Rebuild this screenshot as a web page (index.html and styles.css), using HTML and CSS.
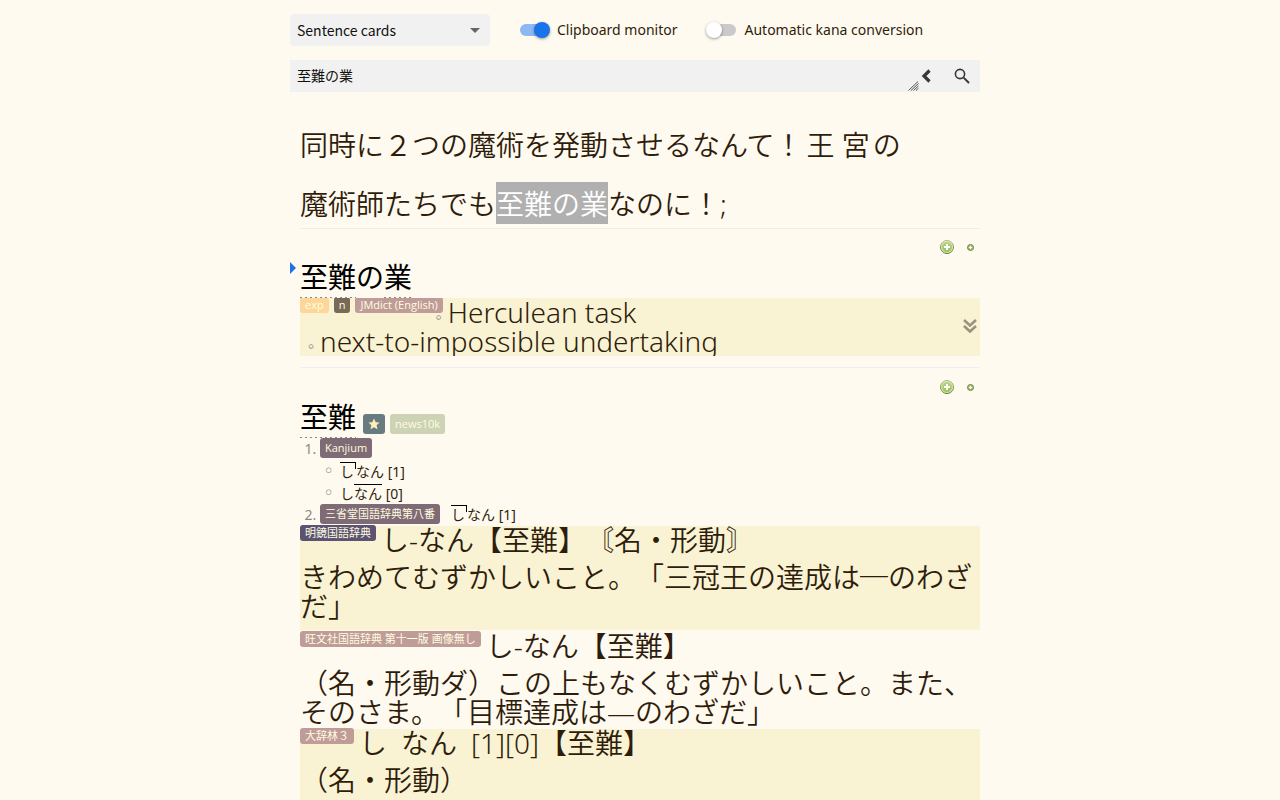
FILE: index.html
```html
<!DOCTYPE html>
<html lang="ja">
<head>
    <meta charset="UTF-8">
    <meta name="viewport" content="width=device-width, initial-scale=1.0">
    <title>Dictionary Search</title>
    <link rel="stylesheet" href="styles.css">
</head>
<body>
    <svg class="sprites" aria-hidden="true">
        <defs>
            <radialGradient id="green" cx="50%" cy="65%" r="60%">
                <stop offset="0" stop-color="#8fbb4c"/>
                <stop offset="1" stop-color="#bdd58b"/>
            </radialGradient>
            <linearGradient id="rim" x1="0" y1="0" x2="0" y2="1">
                <stop offset="0" stop-color="#a9b97c"/>
                <stop offset="1" stop-color="#5e7436"/>
            </linearGradient>
            <symbol id="plus" viewBox="0 0 14 14">
                <circle cx="7" cy="7" r="6.5" fill="#e3eec0" stroke="url(#rim)"/>
                <circle cx="7" cy="7" r="5.3" fill="url(#green)"/>
                <path d="M7 4v6M4 7h6" stroke="#fff" stroke-width="2"/>
            </symbol>
            <symbol id="plus-small" viewBox="0 0 7 7">
                <circle cx="3.5" cy="3.5" r="3" fill="#a9bf75" stroke="#75864a"/>
                <path d="M3.5 2v3M2 3.5h3" stroke="#fff"/>
            </symbol>
        </defs>
    </svg>

    <div class="container">
        <header>
            <div class="options">
                <div class="profile">
                    <select aria-label="Profile">
                        <option>Sentence cards</option>
                    </select>
                    <svg width="10" height="5" viewBox="0 0 10 5"><path d="M0 0h10L5 5z" fill="#666"/></svg>
                </div>
                <label class="toggle"><input type="checkbox" checked><span>Clipboard monitor</span></label>
                <label class="toggle"><input type="checkbox"><span>Automatic kana conversion</span></label>
            </div>
            <div class="search-bar">
                <div class="search-text">
                    <textarea rows="1" aria-label="Search text">至難の業</textarea>
                    <svg width="11" height="10" viewBox="0 0 11 10"><path d="M0.5 9.5l9.5-9M3 9.5l7.5-7M5.5 9.5l5-4.6M8 9.5l2.5-2.3" stroke="#555" fill="none"/></svg>
                </div>
                <button aria-label="Back">
                    <svg width="10" height="14" viewBox="0 0 10 14"><path d="M8.5 1.5L3 7l5.5 5.5" fill="none" stroke="#3b3734" stroke-width="3.2"/></svg>
                </button>
                <button aria-label="Search">
                    <svg width="16" height="16" viewBox="0 0 16 16" fill="none" stroke="#3b3734"><circle cx="6" cy="6" r="4.6" stroke-width="1.6"/><path d="M9.6 9.6l5.4 5.4" stroke-width="2"/></svg>
                </button>
            </div>
        </header>

        <main>
            <section class="sentence">
                <div>同時に２つの魔術を発動させるなんて！<span class="kanji">王</span><span class="kanji">宮</span>の</div>
                <div>魔術師たちでも<mark>至難の業</mark>なのに！;</div>
            </section>

            <article class="entry current">
                <div class="entry-header">
                    <h2><a href="#">至難</a>の<a href="#">業</a></h2>
                    <div class="actions">
                        <button aria-label="Add expression"><svg width="14" height="14"><use href="#plus"/></svg></button>
                        <button aria-label="Add reading"><svg width="7" height="7"><use href="#plus-small"/></svg></button>
                    </div>
                </div>
                <div class="definition shaded collapsed">
                    <div class="tags">
                        <span class="tag exp">exp</span>
                        <span class="tag noun">n</span>
                        <span class="tag dict">JMdict (English)</span>
                    </div>
                    <ul class="glossary">
                        <li><span>Herculean task</span></li>
                        <li><span>next-to-impossible undertaking</span></li>
                    </ul>
                    <button class="expand" aria-label="Expand">
                        <svg width="14" height="15" viewBox="0 0 14 15" fill="none" stroke="#9b917f" stroke-width="2.6"><path d="M1 1l6 5.5L13 1M1 7l6 5.5L13 7"/></svg>
                    </button>
                </div>
            </article>

            <article class="entry">
                <div class="entry-header">
                    <h2><a href="#">至難</a></h2>
                    <span class="tag tall popular"><svg width="12" height="12" viewBox="0 0 12 12"><path d="M6 0.5l1.7 3.7 3.8.4-2.9 2.7.9 4L6 9.3l-3.5 2 .9-4L.5 4.6l3.8-.4z" fill="#ffefb5"/></svg></span>
                    <span class="tag tall freq">news10k</span>
                    <div class="actions">
                        <button aria-label="Add expression"><svg width="14" height="14"><use href="#plus"/></svg></button>
                        <button aria-label="Add reading"><svg width="7" height="7"><use href="#plus-small"/></svg></button>
                    </div>
                </div>
                <ol class="accents">
                    <li>
                        <span class="tag tall accent">Kanjium</span>
                        <ul>
                            <li><span class="pitch drop">し</span>なん [1]</li>
                            <li>し<span class="pitch">なん</span> [0]</li>
                        </ul>
                    </li>
                    <li><span class="tag tall accent">三省堂国語辞典第八番</span><span class="pitch drop inline">し</span>なん [1]</li>
                </ol>
                <div class="definition shaded meikyo">
                    <div class="tags"><span class="tag navy">明鏡国語辞典</span></div>
                    <p>し-なん【至難】〘名・形動〙</p>
                    <p>きわめてむずかしいこと。「三冠王の達成は─のわざだ」</p>
                </div>
                <div class="definition obunsha">
                    <div class="tags"><span class="tag dict">旺文社国語辞典 第十一版 画像無し</span></div>
                    <p>し-なん【至難】</p>
                    <p>（名・形動ダ）この上もなくむずかしいこと。また、そのさま。「目標達成は—のわざだ」</p>
                </div>
                <div class="definition shaded daijirin">
                    <div class="tags"><span class="tag dict">大辞林３</span></div>
                    <p>し&ensp;なん&ensp;[1][0]【至難】</p>
                    <p>（名・形動）</p>
                </div>
            </article>
        </main>
    </div>
</body>
</html>
```
FILE: styles.css
```css
* {
    box-sizing: border-box;
}

body {
    font-family: "Noto Sans", "Noto Sans CJK JP", sans-serif;
    font-size: 14px;
    text-spacing-trim: space-all;
    margin: 0;
    height: 100vh;
    overflow: hidden;
    background-color: #fffaf0;
    color: #2f1d0c;
}

button {
    border: none;
    padding: 0;
    background: none;
    cursor: pointer;
}

svg {
    display: block;
}

.sprites {
    position: absolute;
    width: 0;
    height: 0;
}

.container {
    max-width: 700px;
    margin: 0 auto;
}

header {
    padding: 14px 10px 0 0;
}

.options {
    display: flex;
    align-items: center;
    height: 32px;
}

.profile {
    position: relative;
}

.profile select {
    appearance: none;
    display: block;
    width: 200px;
    height: 32px;
    padding: 0 7px;
    border: none;
    border-radius: 4px;
    background: #f1f1f1;
    font-family: "Noto Sans CJK JP", sans-serif;
    font-size: 14px;
    color: #111;
}

.profile svg {
    position: absolute;
    right: 10px;
    top: 14px;
    pointer-events: none;
}

.toggle {
    display: flex;
    align-items: center;
    margin-left: 30px;
}

.toggle span {
    padding-bottom: 2px;
}

.toggle input {
    appearance: none;
    position: relative;
    width: 28px;
    height: 12px;
    margin: 0 9px 0 0;
    border-radius: 6px;
    background: #cacaca;
}

.toggle input::before {
    content: "";
    position: absolute;
    top: -2px;
    left: -2px;
    width: 16px;
    height: 16px;
    border-radius: 50%;
    background: #fff;
    box-shadow: 0 1px 3px rgba(0, 0, 0, 0.4);
}

.toggle input:checked {
    background: #8cb8f4;
}

.toggle input:checked::before {
    left: 14px;
    background: #1a73e8;
}

.search-bar {
    display: flex;
    height: 32px;
    margin-top: 14px;
    background: #f1f1f1;
}

.search-text {
    position: relative;
    flex: 1;
}

.search-text textarea {
    display: block;
    width: 100%;
    height: 32px;
    padding: 5px 7px;
    border: none;
    outline: none;
    resize: none;
    background: none;
    font-family: "Noto Sans CJK JP", sans-serif;
    font-size: 14px;
    line-height: 20px;
    color: #111;
}

.search-text svg {
    position: absolute;
    right: 0;
    bottom: 1px;
}

.search-bar button {
    display: flex;
    align-items: center;
    justify-content: center;
    width: 36px;
}

.search-text + button {
    width: 14px;
    margin-right: 11px;
}

main {
    padding: 32px 10px 0;
}

.sentence {
    padding-bottom: 3px;
    font-size: 28px;
    font-weight: 350;
    line-height: 42px;
}

.sentence div + div {
    margin-top: 17px;
}

.sentence mark {
    padding: 3px 0 1px;
    background: #b0b0b0;
    color: #fff;
}

.kanji {
    margin: 0 3px 0 4px;
}

.entry {
    position: relative;
    border-top: 1px solid #eee;
    padding-bottom: 11px;
}

.entry + .entry {
    padding-top: 1px;
}

.current::before {
    content: "";
    position: absolute;
    left: -10px;
    top: 33px;
    border: 6px solid transparent;
    border-left-color: #1a73e8;
    border-right: none;
}

.entry-header {
    display: flex;
    align-items: flex-end;
    height: 69px;
}

h2 {
    margin: 0 7px 0 0;
    font-size: 28px;
    font-weight: 400;
    line-height: 40px;
    color: #000;
}

h2 a {
    display: inline-block;
    padding-bottom: 1px;
    background: repeating-linear-gradient(90deg, #888 0 2px, transparent 2px 5px) left bottom / 100% 1px no-repeat;
    color: #000;
    text-decoration: none;
}

.entry-header .tag {
    margin-bottom: 4px;
}

.actions {
    display: flex;
    align-items: center;
    align-self: flex-start;
    gap: 13px;
    margin: 11px 6px 0 auto;
}

.tags {
    float: left;
    display: flex;
    margin-top: -1px;
}

.tag {
    display: inline-block;
    margin-right: 5px;
    padding: 0 5px;
    border-radius: 3px;
    font-family: "Open Sans", "Noto Sans CJK JP", sans-serif;
    font-size: 11px;
    font-weight: 400;
    line-height: 16px;
    color: #fffde0;
    white-space: nowrap;
}

.tall {
    line-height: 20px;
}

.exp {
    background: #ffd699;
}

.noun {
    background: #776a57;
}

.dict {
    background: #c09c98;
}

.navy {
    background: #5b5371;
}

.accent {
    background: #7f6b75;
}

.freq {
    background: #cdd3b5;
}

.popular {
    height: 20px;
    padding: 4px 5px;
    background: #687b81;
}

.definition {
    font-size: 28px;
    font-weight: 350;
    line-height: 29px;
}

.definition p {
    margin: 0;
}

.definition p + p {
    margin-top: 8px;
}

.shaded {
    background: #f9f3d4;
}

.collapsed {
    position: relative;
    height: 58px;
    overflow: hidden;
}

.expand {
    position: absolute;
    right: 3px;
    top: 21px;
}

ul,
ol {
    margin: 0;
    padding-left: 20px;
}

ul {
    list-style-type: "◦\2004";
}

li::marker {
    color: #888;
}

ul li::marker {
    font-family: "DejaVu Sans", sans-serif;
    font-size: 18px;
}

.glossary {
    font-size: 14px;
    line-height: 16px;
}

.glossary span {
    font-size: 28px;
    line-height: 29px;
}

.accents li {
    line-height: 22px;
}

.accents ul li {
    line-height: 21px;
}

.accents .tag {
    vertical-align: top;
}

.pitch {
    display: inline-block;
    border-top: 1px solid #000;
    line-height: 18px;
}

.drop {
    position: relative;
    padding-right: 2px;
}

.drop::after {
    content: "";
    position: absolute;
    top: 0;
    right: 0;
    height: 6px;
    border-right: 1px solid #000;
}

.inline {
    margin-left: 6px;
}

.meikyo {
    padding-bottom: 9px;
}

.obunsha {
    padding: 2px 0;
}

.daijirin {
    padding-bottom: 16px;
}
```
